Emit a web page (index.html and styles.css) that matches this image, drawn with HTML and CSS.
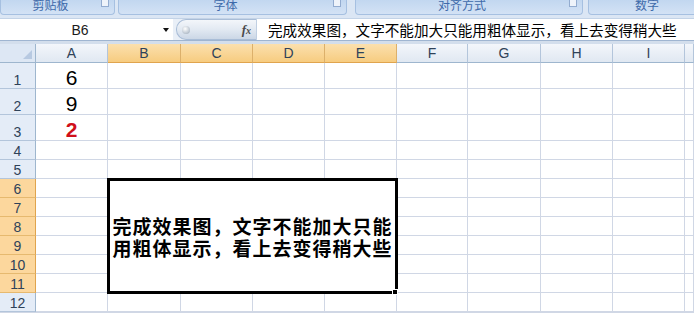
FILE: index.html
```html
<!DOCTYPE html>
<html lang="zh-CN">
<head>
<meta charset="utf-8">
<title>Excel</title>
<link rel="stylesheet" href="styles.css">
</head>
<body>
<div class="ribbon">
  <div class="group g1"><span class="lbl">剪贴板</span><span class="launch"></span></div>
  <div class="group g2"><span class="lbl">字体</span><span class="launch"></span></div>
  <div class="group g3"><span class="lbl">对齐方式</span><span class="launch"></span></div>
  <div class="group g4"><span class="lbl">数字</span><span class="launch"></span></div>
</div>
<div class="fbar">
  <div class="namebox"><span class="ref">B6</span><span class="drop"></span></div>
  <div class="pill"><span class="knob"></span><span class="fx">f<small>x</small></span></div>
  <div class="finput">完成效果图，文字不能加大只能用粗体显示，看上去变得稍大些</div>
</div>
<div class="strip"></div>
<div class="sheet">
  <div class="merged"><div class="mtext"><div>完成效果图，文字不能加大只能</div><div>用粗体显示，看上去变得稍大些</div></div><span class="handle"></span></div>

  <div class="corner"><span class="tri"></span></div>
  <div class="ch">A</div><div class="ch sel">B</div><div class="ch sel">C</div><div class="ch sel">D</div><div class="ch sel">E</div><div class="ch">F</div><div class="ch">G</div><div class="ch">H</div><div class="ch">I</div><div class="ch"></div>

  <div class="rh">1</div><div class="c num">6</div><div class="c"></div><div class="c"></div><div class="c"></div><div class="c"></div><div class="c"></div><div class="c"></div><div class="c"></div><div class="c"></div><div class="c"></div>
  <div class="rh">2</div><div class="c num">9</div><div class="c"></div><div class="c"></div><div class="c"></div><div class="c"></div><div class="c"></div><div class="c"></div><div class="c"></div><div class="c"></div><div class="c"></div>
  <div class="rh">3</div><div class="c num red">2</div><div class="c"></div><div class="c"></div><div class="c"></div><div class="c"></div><div class="c"></div><div class="c"></div><div class="c"></div><div class="c"></div><div class="c"></div>
  <div class="rh">4</div><div class="c"></div><div class="c"></div><div class="c"></div><div class="c"></div><div class="c"></div><div class="c"></div><div class="c"></div><div class="c"></div><div class="c"></div><div class="c"></div>
  <div class="rh">5</div><div class="c"></div><div class="c"></div><div class="c"></div><div class="c"></div><div class="c"></div><div class="c"></div><div class="c"></div><div class="c"></div><div class="c"></div><div class="c"></div>
  <div class="rh sel">6</div><div class="c"></div><div class="c"></div><div class="c"></div><div class="c"></div><div class="c"></div><div class="c"></div>
  <div class="rh sel">7</div><div class="c"></div><div class="c"></div><div class="c"></div><div class="c"></div><div class="c"></div><div class="c"></div>
  <div class="rh sel">8</div><div class="c"></div><div class="c"></div><div class="c"></div><div class="c"></div><div class="c"></div><div class="c"></div>
  <div class="rh sel">9</div><div class="c"></div><div class="c"></div><div class="c"></div><div class="c"></div><div class="c"></div><div class="c"></div>
  <div class="rh sel">10</div><div class="c"></div><div class="c"></div><div class="c"></div><div class="c"></div><div class="c"></div><div class="c"></div>
  <div class="rh sel">11</div><div class="c"></div><div class="c"></div><div class="c"></div><div class="c"></div><div class="c"></div><div class="c"></div>
  <div class="rh">12</div><div class="c"></div><div class="c"></div><div class="c"></div><div class="c"></div><div class="c"></div><div class="c"></div><div class="c"></div><div class="c"></div><div class="c"></div><div class="c"></div>
</div>
</body>
</html>
```
FILE: styles.css
```css
* { box-sizing: border-box; }
html, body { margin: 0; padding: 0; }
body {
  width: 694px;
  height: 314px;
  overflow: hidden;
  background: #fff;
  font-family: "Liberation Sans", "Noto Sans CJK SC", sans-serif;
}

/* ribbon group labels */
.ribbon {
  height: 18px;
  display: flex;
  background: #dbe6f4;
  overflow: hidden;
}
.group {
  flex: none;
  position: relative;
  height: 15px;
  padding-right: 14px;
  text-align: center;
  overflow: hidden;
  background: linear-gradient(#c2d7f0, #d3e2f5);
  border: 1px solid #a6c0e1;
  border-top: none;
  border-radius: 0 0 4px 4px;
}
.g1 { width: 115px; }
.g2 { width: 229px; margin-left: 3px; }
.g3 { width: 228px; margin-left: 8px; }
.g4 { width: 132px; margin-left: 5px; }
.lbl {
  display: block;
  margin-top: -1px;
  font: 12px/12px "Noto Sans CJK SC", sans-serif;
  color: #3e6aaa;
}
.launch {
  position: absolute;
  right: 5px;
  top: 0;
  width: 8px;
  height: 7px;
  background: #eef3fa;
  border: 1px solid #93acd0;
  border-top: none;
}

/* formula bar */
.fbar {
  display: flex;
  height: 23px;
  background: #e9eff7;
  border-top: 1px solid #c3d3e7;
  border-bottom: 1px solid #9fb5d1;
}
.namebox {
  width: 173px;
  display: flex;
  align-items: center;
  background: #fff;
}
.ref {
  width: 160px;
  text-align: center;
  font-size: 14px;
  color: #1b1b1b;
}
.drop {
  width: 0;
  height: 0;
  margin-left: 3px;
  border-left: 3.5px solid transparent;
  border-right: 3.5px solid transparent;
  border-top: 4px solid #111;
}
.pill {
  width: 81px;
  margin-left: 3px;
  display: flex;
  align-items: center;
  justify-content: space-between;
  padding: 0 5px 0 5px;
  background: linear-gradient(#f3f6fa, #e2e9f2 50%, #cbd7e6);
  border: 1px solid #a9bdd7;
  border-right-color: #c0cfe2;
  border-radius: 10px 0 0 10px;
}
.knob {
  width: 8px;
  height: 8px;
  border-radius: 50%;
  background: radial-gradient(circle at 40% 35%, #ffffff, #bcc6d1 65%, #8e99a6);
}
.fx {
  font: italic bold 13px "Liberation Serif", serif;
  color: #4a4a4a;
}
.fx small { font-size: 10px; }
.finput {
  flex: 1;
  padding-left: 11px;
  background: #fff;
  font: 14.6px/21px "Noto Sans CJK SC", sans-serif;
  color: #000;
  white-space: nowrap;
  overflow: hidden;
}
.strip {
  height: 3px;
  background: #d3deec;
}

/* sheet grid */
.sheet {
  display: grid;
  grid-template-columns: 36px 72px 73px 72px 72px 72px 71px 73px 72px 72px 1fr;
  grid-template-rows: 19px repeat(3, 26px) repeat(9, 19px);
  border-bottom: 1px solid #d0d7e5;
}
.c {
  border-right: 1px solid #d0d7e5;
  border-bottom: 1px solid #d0d7e5;
  background: #fff;
}
.num {
  display: flex;
  align-items: flex-end;
  justify-content: center;
  font: 21px/21px "Liberation Sans", sans-serif;
  color: #000;
}
.red {
  font-weight: bold;
  color: #d0101a;
}
.corner {
  position: relative;
  background: #dde7f4;
  border-right: 1px solid #9eb6ce;
  border-bottom: 1px solid #9eb6ce;
}
.tri {
  position: absolute;
  right: 3px;
  bottom: 3px;
  width: 0;
  height: 0;
  border-left: 9px solid transparent;
  border-bottom: 9px solid #b7c9e1;
}
.ch {
  display: flex;
  align-items: center;
  justify-content: center;
  font-size: 14px;
  color: #2f4259;
  background: linear-gradient(#f3f6fb, #e0e8f2);
  border-right: 1px solid #b3c5db;
  border-bottom: 1px solid #9eb6ce;
}
.ch.sel {
  background: linear-gradient(#fbe0ae, #f7cc80);
  border-right-color: #dcb06b;
  border-bottom-color: #e0a44e;
}
.rh {
  display: flex;
  align-items: flex-end;
  justify-content: center;
  font: 14px/16px "Liberation Sans", sans-serif;
  color: #2f4259;
  background: #e4ecf7;
  border-right: 1px solid #9eb6ce;
  border-bottom: 1px solid #b3c5db;
}
.rh.sel {
  background: #fcd79d;
  border-right-color: #e0a44e;
  border-bottom-color: #e6b96f;
}

/* merged cell B6:E11 */
.merged {
  grid-column: 3 / 7;
  grid-row: 7 / 13;
  margin: -1px;
  position: relative;
  z-index: 1;
  display: flex;
  align-items: center;
  justify-content: center;
  background: #fff;
  border: 3px solid #000;
}
.mtext {
  font: bold 19px/22px "Noto Sans CJK SC", sans-serif;
  letter-spacing: 1px;
  text-align: center;
  white-space: nowrap;
  color: #000;
  padding-top: 1px;
}
.handle {
  position: absolute;
  right: -3px;
  bottom: -4px;
  width: 6px;
  height: 6px;
  background: #000;
  border: 1px solid #fff;
}
```
